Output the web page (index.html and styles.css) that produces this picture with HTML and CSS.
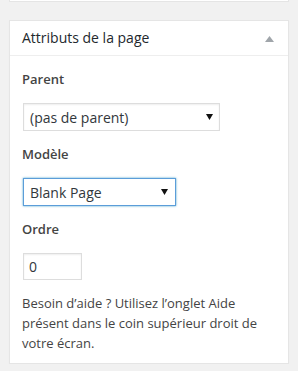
FILE: index.html
```html
<!DOCTYPE html>
<html>
<head>
	<title>Attributs de la page</title>
	<meta http-equiv="content-type" content="text/html; charset=UTF-8">
	<link rel="stylesheet" href="styles.css">
</head>
<body>
	<div class="postbox-prev"></div>

	<div class="postbox">
		<div class="hndle">
			<span>Attributs de la page</span>
			<svg class="toggle" width="9" height="6" viewBox="0 0 9 6">
				<path d="M4.5 0 L9 6 L0 6 Z" fill="#a0a5aa"/>
			</svg>
		</div>
		<div class="inside">
			<p class="label">Parent</p>
			<div class="select select-parent">
				<span>(pas de parent)</span>
				<svg width="7" height="6" viewBox="0 0 7 6"><path d="M0 0 L7 0 L3.5 6 Z" fill="#111"/></svg>
			</div>

			<p class="label">Modèle</p>
			<div class="select select-template focus">
				<span>Blank Page</span>
				<svg width="7" height="6" viewBox="0 0 7 6"><path d="M0 0 L7 0 L3.5 6 Z" fill="#111"/></svg>
			</div>

			<p class="label">Ordre</p>
			<div class="order">0</div>

			<p class="help">Besoin d’aide ? Utilisez l’onglet Aide présent dans le coin supérieur droit de votre écran.</p>
		</div>
	</div>
</body>
</html>
```

FILE: styles.css
```css
*{
	box-sizing: border-box;
}

body{
	margin: 0;
	background: #f1f1f1;
	font-family: 'Open Sans', sans-serif;
	font-size: 13px;
	color: #444;
}

.postbox-prev{
	margin: 0 9px 0 9px;
	height: 2px;
	background: #fff;
	border: 1px solid #e5e5e5;
	border-top: 0;
	width: 280px;
}

.postbox{
	margin: 18px 9px 0 9px;
	width: 280px;
	background: #fff;
	border: 1px solid #e5e5e5;
	box-shadow: 0 1px 1px rgba(0,0,0,.04);
}

.hndle{
	display: flex;
	align-items: center;
	justify-content: space-between;
	height: 35px;
	padding: 0 14px 0 12px;
	border-bottom: 1px solid #eee;
	font-size: 14px;
	line-height: 34px;
	color: #23282d;
}

.hndle .toggle{
	margin-top: 1px;
}

.inside{
	padding: 13px 12px 10px 12px;
}

.label{
	margin: 0 0 14px 0;
	font-weight: 600;
	line-height: 20px;
	color: #444;
}

.select{
	display: flex;
	align-items: center;
	justify-content: space-between;
	height: 28px;
	margin: 0 0 13px 1px;
	padding: 0 6px 0 6px;
	border: 1px solid #ddd;
	font-size: 14px;
	color: #32373c;
	box-shadow: inset 0 1px 2px rgba(0,0,0,.07);
}

.select-parent{
	width: 197px;
}

.select-template{
	width: 153px;
	padding-right: 7px;
}

.select.focus{
	border-color: #5b9dd9;
	box-shadow: 0 0 2px rgba(30,140,190,.8);
}

.order{
	width: 59px;
	height: 27px;
	margin: 0 0 13px 1px;
	padding: 0 5px;
	border: 1px solid #ddd;
	box-shadow: inset 0 1px 2px rgba(0,0,0,.07);
	font-size: 14px;
	line-height: 25px;
	color: #32373c;
}

.help{
	margin: 0;
	line-height: 20px;
}
```
